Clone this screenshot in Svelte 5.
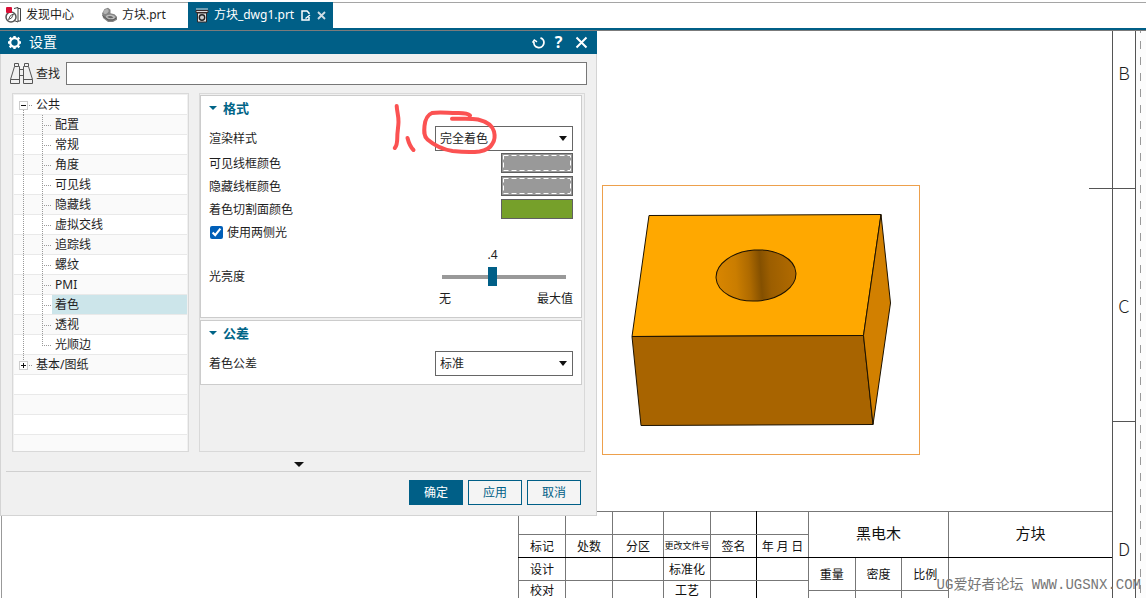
<script lang="ts">
  type TreeItem = { label: string; child: boolean; box?: string };

  const items: TreeItem[] = [
    { label: "公共", child: false, box: "minus" },
    { label: "配置", child: true },
    { label: "常规", child: true },
    { label: "角度", child: true },
    { label: "可见线", child: true },
    { label: "隐藏线", child: true },
    { label: "虚拟交线", child: true },
    { label: "追踪线", child: true },
    { label: "螺纹", child: true },
    { label: "PMI", child: true },
    { label: "着色", child: true },
    { label: "透视", child: true },
    { label: "光顺边", child: true },
    { label: "基本/图纸", child: false, box: "plus" },
  ];

  const revisionColumns = [47, 47, 51, 47, 46, 52];
  const revisionRows = [
    ["", "", "", "", "", ""],
    ["标记", "处数", "分区", "更改文件号", "签名", "年 月 日"],
    ["设计", "", "", "标准化", "", ""],
    ["校对", "", "", "工艺", "", ""],
  ];

  let query = $state("");
  let selected = $state("着色");
  let renderStyle = $state("完全着色");
  let tolerance = $state("标准");
  let twoSided = $state(true);
  let brightness = $state(0.4);

  let brightnessText = $derived(String(brightness).replace(/^0\./, "."));
</script>

<div class="app">
  <!-- Document tabs -->
  <nav class="tabs">
    <button class="tab discover">
      <svg width="17" height="18" viewBox="0 0 17 18" fill="none">
        <path d="M9 2.5 13 1.5V16l-4-1.500M13 2.500h2.500V15H13" stroke="#444" />
        <circle cx="6" cy="11" r="5" fill="#fff" stroke="#555" stroke-width="1.500" />
        <path d="m3.500 13.500 2-4 3-1.500-2 4z" stroke="#555" />
        <rect x="1" y="1" width="6" height="6" rx="1" fill="#d80f36" />
      </svg>
      发现中心
    </button>
    <button class="tab part">
      <svg width="17" height="16" viewBox="0 0 17 16">
        <path d="M1 6.500 3.500 2 7 .8l2.500 2v3.500l4 1 2.500 2.500v3L12 15H7L2 11z" fill="#858585" />
        <ellipse cx="5" cy="4.500" rx="3" ry="2" transform="rotate(-35 5 4.500)" fill="#b4b4b4" />
        <ellipse cx="9.500" cy="10" rx="4.500" ry="2.200" transform="rotate(8 9.500 10)" fill="#bdbdbd" />
        <path d="M6 10q3-2 6.500.5Q9 12 6 10z" fill="#666" />
        <path d="M1.500 8.500 7 13h5l3.500-2" fill="none" stroke="#555" />
      </svg>
      方块.prt
    </button>
    <button class="tab active">
      <svg width="14" height="15" viewBox="0 0 14 15">
        <path d="M1 2.500h12v2H1z" fill="#ddd" stroke="#3b2b2b" />
        <path d="M2.500 5h9v9h-9z" fill="#e4e4e4" stroke="#332a2a" />
        <circle cx="7" cy="9.500" r="2.700" fill="#ccc" stroke="#222" stroke-width="1.400" />
        <path d="M1 1h12" stroke="#ddd" />
      </svg>
      方块_dwg1.prt
      <svg class="tab-mark" width="10" height="11" viewBox="0 0 10 11" fill="none" stroke="#fff" stroke-width="1.500">
        <path d="M8 7v3H1V1h5l2 2v1M4.500 8.500 9 5" />
      </svg>
      <svg class="tab-close" width="9" height="9" viewBox="0 0 9 9" stroke="#cfdde5" stroke-width="1.800">
        <path d="m1 1 7 7M8 1 1 8" />
      </svg>
    </button>
  </nav>

  <main class="workspace">
    <!-- Drawing sheet -->
    <div class="sheet">
      <div class="title-block">
        <table class="revisions">
          <colgroup>
            {#each revisionColumns as width}
              <col style="width: {width}px" />
            {/each}
          </colgroup>
          <tbody>
            {#each revisionRows as row}
              <tr>
                {#each row as cell}
                  <td class:small={cell === "更改文件号"}>{cell}</td>
                {/each}
              </tr>
            {/each}
          </tbody>
        </table>
        <table class="material">
          <tbody>
            <tr class="heading"><td class="name" colspan="3">黑电木</td></tr>
            <tr class="props"><td>重量</td><td>密度</td><td>比例</td></tr>
            <tr><td></td><td></td><td></td></tr>
          </tbody>
        </table>
        <div class="part-name">
          <span class="name">方块</span>
        </div>
      </div>
    </div>
    <div class="zones">
      <div class="zone long"><span>B</span></div>
      <div class="zone"><span>C</span></div>
      <div class="zone last"><span>D</span></div>
    </div>
    <div class="margin"></div>

    <svg class="model" viewBox="602 185 318 270" role="img" aria-label="方块">
      <defs>
        <linearGradient id="bore">
          <stop offset="0" stop-color="#d98600" />
          <stop offset="0.250" stop-color="#ca7d00" />
          <stop offset="0.420" stop-color="#ae6a00" />
          <stop offset="0.560" stop-color="#845000" />
          <stop offset="0.680" stop-color="#9c5e00" />
          <stop offset="1" stop-color="#b26b00" />
        </linearGradient>
      </defs>
      <rect x="602.500" y="185.500" width="317" height="269" fill="#fff" stroke="#eda04c" />
      <g stroke="#1c1200" stroke-linejoin="round">
        <path d="M649 215.500 881 214.500 863.500 335.500 632 336.500z" fill="#ffa800" />
        <path d="M632 336.500 863.500 335.500 873 424.500 641 425.500z" fill="#a86400" />
        <path d="M881 214.500 890.500 303 873 424.500 863.500 335.500z" fill="#d28000" />
        <ellipse cx="756" cy="275.500" rx="40" ry="25.500" transform="rotate(-4 756 275.500)" fill="url(#bore)" />
      </g>
    </svg>

    <span class="watermark">UG爱好者论坛 WWW.UGSNX.COM</span>

    <!-- Settings dialog -->
    <section class="dialog" aria-label="设置">
      <header class="title-bar">
        <svg width="15" height="15" viewBox="0 0 15 15" fill="none" stroke="#fff">
          <circle cx="7.500" cy="7.500" r="4.300" stroke-width="2.200" />
          <path
            d="M7.500 1v2M7.500 12v2M1 7.500h2M12 7.500h2M2.700 2.700l1.500 1.500M10.800 10.800l1.500 1.500M2.700 12.300l1.500-1.500M10.800 4.200l1.500-1.500"
            stroke-width="2.400"
          />
        </svg>
        <h1>设置</h1>
        <button aria-label="重置">
          <svg width="13" height="13" viewBox="0 0 13 13" fill="none" stroke="#fff" stroke-width="1.800">
            <path d="M8.500 1.800A5 5 0 1 1 2 5.500" />
            <path d="M.5 6.500 2.300 4 5 5.800" stroke-width="1.500" />
          </svg>
        </button>
        <button class="help" aria-label="帮助">?</button>
        <button aria-label="关闭">
          <svg width="13" height="13" viewBox="0 0 13 13" stroke="#fff" stroke-width="2">
            <path d="m1.500 1.500 10 10M11.500 1.500l-10 10" />
          </svg>
        </button>
      </header>

      <div class="search">
        <svg width="25" height="23" viewBox="0 0 25 23" fill="none" stroke="#555">
          <path d="M5.500 1.500h4v3h-4zM15.500 1.500h4v3h-4z" />
          <path d="M5.500 4.500 1.500 17.500v4h9v-17M9.500 4.500h1M19.500 4.500l4 13v4h-9v-17h1" />
          <path d="M1.500 17.500h9M14.500 17.500h9M10.500 7.500h4M10.500 13.500h4" />
        </svg>
        <label for="find">查找</label>
        <input id="find" type="text" bind:value={query} />
      </div>

      <div class="main">
        <ul class="tree">
          {#each items as item, i}
            <li>
              {#if item.child}
                <span class="trunk"></span>
                <span class="branch" class:end={!items[i + 1]?.child}></span>
              {:else}
                <svg class="root" width="19" height="20" viewBox="0 0 19 20" fill="none">
                  {#if item.box === "minus"}
                    <path d="M9.500 15v5" stroke="#999" stroke-dasharray="1 1" />
                  {:else}
                    <path d="M9.500 0v6" stroke="#999" stroke-dasharray="1 1" />
                  {/if}
                  <rect x="5.500" y="6.500" width="8" height="8" fill="#fff" stroke="#ccc" />
                  <path d="M7 10.500h5" stroke="#111" />
                  {#if item.box === "plus"}
                    <path d="M9.500 8v5" stroke="#111" />
                  {/if}
                  <path d="M15 10.500h4" stroke="#999" stroke-dasharray="1 1" />
                </svg>
              {/if}
              <button class:selected={selected === item.label} onclick={() => (selected = item.label)}>
                {item.label}
              </button>
            </li>
          {/each}
        </ul>

        <div class="panel">
          <section class="group">
            <h2>
              <svg width="8" height="4" viewBox="0 0 8 4"><path d="M0 0h8L4 4z" fill="#006487" /></svg>
              格式
            </h2>
            <div class="field">
              <label for="render">渲染样式</label>
              <div class="select">
                <select id="render" bind:value={renderStyle}>
                  <option>完全着色</option>
                  <option>局部着色</option>
                  <option>线框</option>
                </select>
                <svg width="8" height="5" viewBox="0 0 8 5"><path d="M0 0h8L4 5z" fill="#111" /></svg>
              </div>
            </div>
            <div class="colors">
              <div class="field">
                <label for="visible">可见线框颜色</label>
                <button id="visible" class="swatch" aria-label="可见线框颜色">
                  <svg width="70" height="18" fill="none">
                    <rect x="1.500" y="1.500" width="67" height="15" stroke="#fff" stroke-dasharray="5 3" />
                  </svg>
                </button>
              </div>
              <div class="field">
                <label for="hidden">隐藏线框颜色</label>
                <button id="hidden" class="swatch" aria-label="隐藏线框颜色">
                  <svg width="70" height="18" fill="none">
                    <rect x="1.500" y="1.500" width="67" height="15" stroke="#fff" stroke-dasharray="5 3" />
                  </svg>
                </button>
              </div>
              <div class="field">
                <label for="cut">着色切割面颜色</label>
                <button id="cut" class="swatch green" aria-label="着色切割面颜色"></button>
              </div>
              <label class="check">
                <input type="checkbox" bind:checked={twoSided} />
                使用两侧光
              </label>
            </div>
            <div class="field">
              <label for="light">光亮度</label>
              <div class="slider">
                <output for="light" style="padding-left: calc({brightness * 100}% - 5px)">{brightnessText}</output>
                <input id="light" type="range" min="0" max="1" step="0.1" bind:value={brightness} />
                <div class="ends"><span>无</span><span>最大值</span></div>
              </div>
            </div>
            <svg class="markup" viewBox="385 98 115 60" aria-hidden="true">
              <path d="M396.700 106c.3 6 2 10 1.800 16s-1.200 10-1.200 15-.5 9-2.500 11M407.500 138c1 4 3 9 6 12" />
              <path
                d="M470 115.500c-3-3-9-2.500-14-2.500-8 0-16-1.500-24 0-5 2-7 8-7.500 13s-1 10 3 13.500c7 6 15 10 25 11.500 9 1 19 1.500 27 .5 6-1 11-4 13-8 2-3 2.500-8 1.500-12-1.500-6-8-10-16-12-8-1.500-17-.5-26-.7"
              />
            </svg>
          </section>

          <section class="group">
            <h2>
              <svg width="8" height="4" viewBox="0 0 8 4"><path d="M0 0h8L4 4z" fill="#006487" /></svg>
              公差
            </h2>
            <div class="field">
              <label for="tolerance">着色公差</label>
              <div class="select">
                <select id="tolerance" bind:value={tolerance}>
                  <option>标准</option>
                  <option>精细</option>
                </select>
                <svg width="8" height="5" viewBox="0 0 8 5"><path d="M0 0h8L4 5z" fill="#111" /></svg>
              </div>
            </div>
          </section>
        </div>
      </div>

      <button class="expander" aria-label="更多">
        <svg width="10" height="5" viewBox="0 0 10 5"><path d="M0 0h10L5 5z" fill="#111" /></svg>
      </button>

      <footer>
        <button class="primary">确定</button>
        <button>应用</button>
        <button>取消</button>
      </footer>
    </section>
  </main>
</div>

<style>
  :global(body) {
    background: #fff;
  }

  .app {
    min-height: 100vh;
    display: flex;
    flex-direction: column;
    font-family: "Noto Sans", "Noto Sans CJK SC", sans-serif;
    font-size: 12px;
    line-height: 16px;
    color: #1e1e1e;
  }

  .app * {
    box-sizing: border-box;
  }

  button,
  input,
  select {
    font: inherit;
    color: inherit;
    margin: 0;
  }

  button {
    display: flex;
    align-items: center;
    justify-content: center;
    padding: 0;
    border: none;
    background: none;
  }

  /* Tabs */
  .tabs {
    display: flex;
    height: 30px;
    padding-top: 2px;
    border-bottom: 2px solid #005f87;
  }

  .tabs::before {
    content: "";
    position: absolute;
    left: 0;
    right: 0;
    top: 2px;
    border-top: 1px solid #a5a5a5;
  }

  .tab {
    gap: 4px;
    padding: 0 5px;
    white-space: nowrap;
  }

  .tab.discover {
    margin-right: 17px;
  }

  .tab.part {
    margin-right: 17px;
  }

  .tab.active {
    position: relative;
    gap: 5px;
    padding: 0 7px;
    background: #005f87;
    color: #fff;
  }

  .tab-mark {
    margin-left: 2px;
  }

  .tab-close {
    margin-left: 1px;
  }

  /* Workspace */
  .workspace {
    position: relative;
    flex: 1;
    display: grid;
    grid-template-columns: 1fr 24px 10px;
    border-top: 1px solid #7b7b7b;
    overflow: hidden;
  }

  .sheet {
    display: flex;
    align-items: flex-end;
    justify-content: flex-end;
    margin-left: 1px;
    border-left: 1px solid #999;
  }

  .title-block {
    display: flex;
    height: 87px;
    overflow: hidden;
    font-family: "Noto Sans CJK SC", sans-serif;
    color: #111;
  }

  table {
    border-collapse: collapse;
    table-layout: fixed;
  }

  td {
    height: 23px;
    padding: 0;
    border: 1px solid #777;
    line-height: 14px;
    text-align: center;
    white-space: nowrap;
  }

  .revisions {
    width: 291px;
  }

  .revisions td:nth-child(5) {
    border-right-color: #000;
  }

  .revisions tr:nth-child(2) td {
    border-bottom-color: #000;
  }

  .revisions tr:last-child td {
    height: 18px;
    border-bottom: none;
  }

  .revisions .small {
    font-size: 9px;
  }

  .material {
    width: 141px;
    height: 103px;
    margin-left: -1px;
  }

  .material .heading td {
    height: 46px;
    padding-bottom: 3px;
    border-bottom-color: #000;
  }

  .props td {
    height: 33px;
  }

  .name {
    font-size: 15px;
  }

  .part-name {
    width: 163px;
    border-top: 1px solid #777;
  }

  .part-name .name {
    display: flex;
    align-items: center;
    justify-content: center;
    height: 46px;
    padding-bottom: 3px;
    border-bottom: 1px solid #000;
  }

  .zones {
    height: 0;
    min-height: 100%;
    border: 1px solid #555;
    border-width: 0 1px;
  }

  .zone {
    position: relative;
    display: flex;
    align-items: center;
    justify-content: center;
    height: 233px;
    border-bottom: 1px solid #555;
    font-family: "Noto Sans CJK SC", sans-serif;
    font-size: 18px;
    font-weight: 300;
  }

  .zone.long {
    height: 158px;
    padding-bottom: 76px;
  }

  .zone.long::after {
    content: "";
    position: absolute;
    right: 100%;
    bottom: -1px;
    width: 24px;
    border-bottom: 1px solid #555;
  }

  .zone.last {
    height: 176px;
    padding-top: 76px;
    border: none;
  }

  .margin {
    background: repeating-linear-gradient(#999 0 2px, #fcfcfc 2px 10px, #999 10px 16px) 4px 0 / 1px 100% no-repeat #fcfcfc;
  }

  .model {
    position: absolute;
    left: 602px;
    top: 154px;
    width: 318px;
    height: 270px;
  }

  .watermark {
    position: absolute;
    right: 5px;
    bottom: 3px;
    font-family: "Liberation Mono", "Noto Sans CJK SC", monospace;
    font-size: 14px;
    line-height: 20px;
    color: #777;
  }

  /* Dialog */
  .dialog {
    position: absolute;
    left: 0;
    top: -1px;
    width: 597px;
    max-width: 100%;
    border: 1px solid #d4d4d4;
    border-top: none;
    background: #f0f0f0;
  }

  .title-bar {
    display: flex;
    align-items: center;
    height: 24px;
    margin: 0 -1px;
    padding: 0 9px 0 7px;
    background: #005f87;
    color: #fff;
  }

  h1 {
    flex: 1;
    margin: 0 0 0 7px;
    font-size: 14px;
    font-weight: 400;
  }

  .title-bar button {
    width: 13px;
    margin-left: 7px;
  }

  .title-bar button:last-child {
    margin-left: 10px;
  }

  .help {
    font-size: 16px;
    font-weight: 700;
  }

  .search {
    display: flex;
    align-items: center;
    padding: 8px 9px 8px 8px;
  }

  .search label {
    margin: 0 6px 0 2px;
  }

  .search input {
    flex: 1;
    min-width: 0;
    height: 23px;
    padding: 0 4px;
    border: 1px solid #777;
    background: #fff;
  }

  .main {
    display: grid;
    grid-template-columns: 177px 1fr;
    gap: 10px;
    min-height: 359px;
    padding: 0 11px;
  }

  .tree {
    margin: 0;
    padding: 1px 1px 0;
    list-style: none;
    border: 1px solid #d9d9d9;
    background: repeating-linear-gradient(#fff 0 19px, #e9e9e9 19px 20px, #fafafa 20px 39px, #e9e9e9 39px 40px) content-box #fff;
  }

  .tree li {
    display: flex;
    height: 20px;
  }

  .root {
    flex: none;
  }

  .trunk,
  .branch {
    background: repeating-linear-gradient(#999 0 1px, transparent 1px 2px) 0 0 / 1px 100% no-repeat;
  }

  .trunk {
    width: 19px;
    margin-left: 9px;
  }

  .branch {
    width: 10px;
  }

  .branch::before {
    content: "";
    display: block;
    height: 1px;
    margin: 10px 1px 0 0;
    background: repeating-linear-gradient(90deg, #999 0 1px, transparent 1px 2px);
  }

  .branch.end {
    background-size: 1px 10px;
  }

  .tree button {
    flex: 1;
    justify-content: flex-start;
    height: 19px;
    padding-left: 3px;
  }

  .tree button.selected {
    background: #cce5ea;
  }

  .panel {
    display: flex;
    flex-direction: column;
    gap: 2px;
    padding: 1px 2px 0 0;
    border: 1px solid #d9d9d9;
  }

  .group {
    position: relative;
    padding: 0 8px 8px;
    border: 1px solid #ccc;
    background: #fff;
  }

  h2 {
    display: flex;
    align-items: center;
    gap: 6px;
    height: 24px;
    margin: 0 0 6px;
    font-size: 13px;
    font-weight: 700;
    color: #006487;
  }

  .field {
    display: flex;
    align-items: center;
    justify-content: space-between;
  }

  .select {
    display: grid;
    align-items: center;
    width: 138px;
  }

  .select > * {
    grid-area: 1 / 1;
  }

  .select svg {
    justify-self: end;
    margin-right: 6px;
    pointer-events: none;
  }

  select {
    appearance: none;
    width: 100%;
    height: 25px;
    padding: 0 20px 0 4px;
    border: 1px solid #666;
    border-radius: 0;
    background: #fff;
  }

  .colors {
    display: grid;
    gap: 3px;
    margin: 2px 0 3px;
  }

  .colors label {
    padding-top: 1px;
  }

  .swatch {
    width: 72px;
    height: 20px;
    border: 1px solid #606060;
    background: #999;
  }

  .swatch.green {
    background: #76a02a;
  }

  .check {
    display: flex;
    align-items: center;
    gap: 4px;
    height: 20px;
  }

  .check input {
    width: 13px;
    height: 13px;
    margin-left: 1px;
    accent-color: #005fb8;
  }

  .slider {
    width: 134px;
    display: grid;
  }

  .slider output,
  .slider input {
    width: 124px;
    margin-left: 3px;
  }

  .slider output {
    margin-left: 0;
    height: 22px;
    line-height: 20px;
  }

  .slider input {
    appearance: none;
    height: 19px;
    background: linear-gradient(#999, #999) center / 100% 4px no-repeat;
  }

  .slider input::-webkit-slider-thumb {
    appearance: none;
    width: 9px;
    height: 19px;
    background: #005f87;
  }

  .ends {
    display: flex;
    justify-content: space-between;
    height: 23px;
    padding-top: 5px;
  }

  .markup {
    position: absolute;
    top: 2px;
    right: 81px;
    width: 115px;
    height: 60px;
    fill: none;
    stroke: #fb5252;
    stroke-width: 4;
    stroke-linecap: round;
    pointer-events: none;
  }

  .expander {
    width: 100%;
    height: 19px;
    padding-top: 6px;
  }

  footer {
    display: flex;
    justify-content: flex-end;
    gap: 5px;
    margin: 0 5px;
    padding: 8px 10px 10px;
    border-top: 1px solid #d0d0d0;
  }

  footer button {
    width: 54px;
    height: 25px;
    border: 1px solid #005f87;
    background: #f4f4f4;
    color: #005f87;
  }

  footer .primary {
    background: #005f87;
    color: #fff;
  }
</style>
